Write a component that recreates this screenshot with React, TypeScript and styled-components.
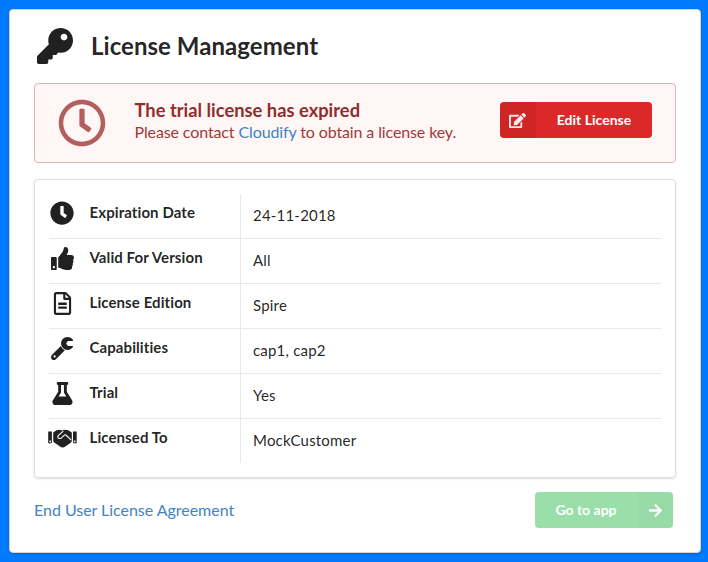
import React from "react";
import styled, { createGlobalStyle } from "styled-components";
import { FaKey, FaRegClock, FaThumbsUp, FaRegFileAlt, FaFlask, FaEdit, FaArrowRight } from "react-icons/fa";

const GlobalStyle = createGlobalStyle`
  *, *::before, *::after { box-sizing: border-box; }
  body {
    margin: 0;
    background: #007bff;
    font: 14px/1.2857 Lato, "Liberation Sans", sans-serif;
    color: rgba(0, 0, 0, 0.87);
  }
`;

const Page = styled.div`
  height: 562px;
  padding: 9px 7px 9px 9px;
`;
const Panel = styled.main`
  height: 544px;
  padding: 15px 24px 0;
  background: #fff;
  border: 1px solid #d4d4d5;
  border-radius: 4px;
  box-shadow: 0 1px 3px rgba(34, 36, 38, 0.3);
`;
const Header = styled.h1`
  display: flex;
  align-items: center;
  gap: 18px;
  height: 43px;
  margin: 0 0 15px;
  padding-left: 3px;
  font-size: 24px;
  font-weight: 700;
  letter-spacing: 0.05px;
  > svg { margin-bottom: 2px; }
`;
const Alert = styled.section`
  display: flex;
  align-items: center;
  height: 80px;
  padding: 0 23px;
  border: 1px solid #e0b4b4;
  border-radius: 4px;
  background: #fff6f6;
  color: #9f3a38;
  > svg { opacity: 0.8; }
  > button { margin-bottom: 6px; }
`;
const Message = styled.div`
  flex: 1;
  margin: 0 0 4px 28.5px;
  font-size: 16px;
  line-height: 22px;
  letter-spacing: -0.12px;
`;
const MessageTitle = styled.div`
  color: #912d2b;
  font-size: 18.3px;
  font-weight: 700;
  letter-spacing: 0.02px;
`;
const Link = styled.a`
  color: #4183c4;
  text-decoration: none;
`;
const Button = styled.button<{ $color: string; $width: number; $iconRight?: boolean }>`
  display: flex;
  flex-direction: ${p => (p.$iconRight ? "row-reverse" : "row")};
  align-items: stretch;
  width: ${p => p.$width}px;
  height: 36px;
  padding: 0;
  border: 0;
  border-radius: 4px;
  overflow: hidden;
  background: ${p => p.$color};
  color: #fff;
  font: 700 14px/36px Lato, sans-serif;
  opacity: ${p => (p.$iconRight ? 0.45 : 1)};
`;
const ButtonIcon = styled.span<{ $shift?: number }>`
  display: grid;
  place-items: center;
  width: 36px;
  padding-right: ${p => p.$shift ?? 0}px;
  background: rgba(0, 0, 0, 0.05);
  > svg { opacity: 0.9; }
`;
const ButtonText = styled.span`
  flex: 1;
`;
const Details = styled.section`
  height: 299px;
  margin-top: 16px;
  padding: 14px;
  border: 1px solid rgba(34, 36, 38, 0.15);
  border-radius: 4px;
  box-shadow: 0 1px 2px rgba(34, 36, 38, 0.15);
`;
const Row = styled.div`
  display: grid;
  grid-template-columns: 192px 1fr;
  height: 45px;
  border-bottom: 1px solid rgba(34, 36, 38, 0.1);
  &:last-child { height: 44px; border-bottom: 0; }
`;
const Label = styled.div`
  display: flex;
  border-right: 1px solid rgba(34, 36, 38, 0.1);
  font-size: 15px;
  font-weight: 700;
  line-height: 37px;
  letter-spacing: 0.09px;
`;
const RowIcon = styled.span`
  display: flex;
  align-items: center;
  justify-content: center;
  width: 28px;
  height: 38px;
  margin: 0 13.5px 0 -1px;
  > svg { flex-shrink: 0; }
`;
const Value = styled.div`
  padding-left: 12px;
  font-size: 15px;
  line-height: 43px;
  letter-spacing: 0.2px;
`;
const Footer = styled.footer`
  display: flex;
  align-items: center;
  justify-content: space-between;
  margin-top: 14px;
  padding-right: 3px;
  font-size: 16px;
  letter-spacing: -0.03px;
`;

const ClockIcon = () => (
  <svg width="24" height="24" viewBox="0 0 512 512" fill="currentColor">
    <path d="M256 8C119 8 8 119 8 256s111 248 248 248 248-111 248-248S393 8 256 8zm57.1 350.1L224.9 294c-3.1-2.3-4.9-5.9-4.9-9.7V116c0-6.6 5.4-12 12-12h48c6.6 0 12 5.4 12 12v137.7l63.5 46.2c5.4 3.9 6.5 11.4 2.6 16.8l-28.2 38.8c-3.9 5.3-11.4 6.5-16.8 2.6z" />
  </svg>
);

const WrenchIcon = () => (
  <svg width="23" height="23" viewBox="0 0 512 512" fill="currentColor">
    <path d="M481.156 200c9.3 0 15.12 10.155 10.325 18.124C466.295 259.992 420.419 288 368 288c-79.222 0-143.501-63.974-143.997-143.079C223.505 65.469 288.548-.001 368.002 0c52.362.001 98.196 27.949 123.4 69.743C496.24 77.766 490.523 88 481.154 88H376l-40 56 40 56h105.156zm-171.649 93.003L109.255 493.255c-24.994 24.993-65.515 24.994-90.51 0-24.993-24.994-24.993-65.516 0-90.51L218.991 202.5c16.16 41.197 49.303 74.335 90.516 90.503zM104 432c0-13.255-10.745-24-24-24s-24 10.745-24 24 10.745 24 24 24 24-10.745 24-24z" />
  </svg>
);

const HandshakeIcon = () => (
  <svg width="30" height="24" viewBox="-1 0 30 24" fill="currentColor">
    <path fillRule="evenodd" d="M.2 5.500h3.700v10.800q0 1-1 1H.2zM2.200 14.500a.9.9 0 1 0 .01 0zM25 5.500h3.700v11.800H26q-1 0-1-1zM26.700 14.500a.9.9 0 1 0 .01 0z" />
    <path d="M5.200 6.500 8.500 4.200q3-1.200 5.600.2 2.900-1.400 6.200-.2l3.500 2.300v8.700q-.4 1.500-2.100 2.200l-4.300 3.200q-2.800 2-5.400 0l-4.300-3.200q-2.100-.8-2.500-2.500z" />
    <path d="M15.300 5.100 10.500 9.300q-1.500 1.900.2 3 1.400.7 2.700-.5l3-2.700q1.200-.5 2 .4l4.800 4.700" fill="none" stroke="#fff" strokeWidth="1.100" />
  </svg>
);

const rows = [
  { icon: <ClockIcon />, label: "Expiration Date", value: "24-11-2018" },
  { icon: <FaThumbsUp size={23} />, label: "Valid For Version", value: "All" },
  { icon: <FaRegFileAlt size={23} />, label: "License Edition", value: "Spire" },
  { icon: <WrenchIcon />, label: "Capabilities", value: "cap1, cap2" },
  { icon: <FaFlask size={23} />, label: "Trial", value: "Yes" },
  { icon: <HandshakeIcon />, label: "Licensed To", value: "MockCustomer" },
];

export default function App() {
  return (
    <>
      <GlobalStyle />
      <Page>
        <Panel>
          <Header><FaKey size={36} />License Management</Header>
          <Alert>
            <FaRegClock size={48} />
            <Message>
              <MessageTitle>The trial license has expired</MessageTitle>
              Please contact <Link>Cloudify</Link> to obtain a license key.
            </Message>
            <Button $color="#db2828" $width={152}>
              <ButtonIcon $shift={2}><FaEdit size={17} /></ButtonIcon>
              <ButtonText>Edit License</ButtonText>
            </Button>
          </Alert>
          <Details>
            {rows.map(({ icon, label, value }) => (
              <Row key={label}>
                <Label><RowIcon>{icon}</RowIcon>{label}</Label>
                <Value>{value}</Value>
              </Row>
            ))}
          </Details>
          <Footer>
            <Link>End User License Agreement</Link>
            <Button $color="#21ba45" $width={138} $iconRight>
              <ButtonIcon><FaArrowRight size={15} /></ButtonIcon>
              <ButtonText>Go to app</ButtonText>
            </Button>
          </Footer>
        </Panel>
      </Page>
    </>
  );
}
